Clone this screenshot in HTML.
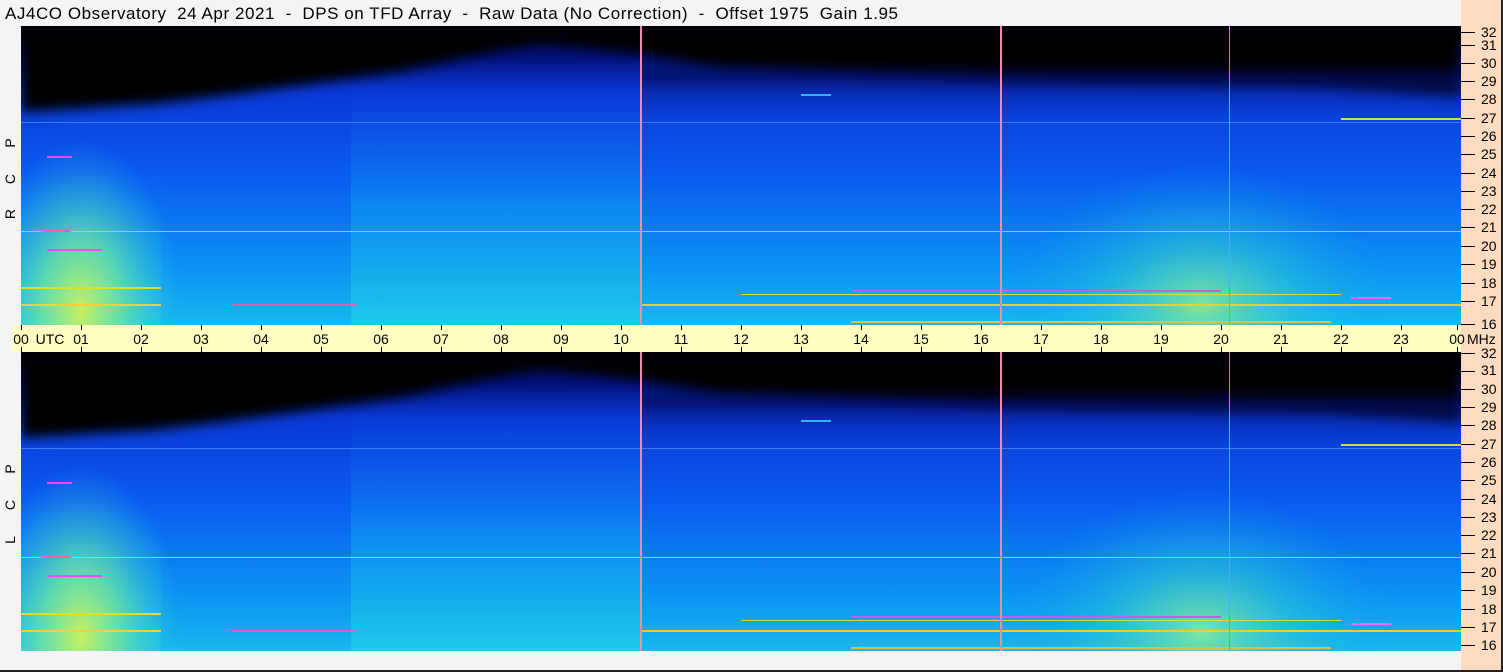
<!DOCTYPE html>
<html><head><meta charset="utf-8"><style>
html,body{margin:0;padding:0;background:#f4f4f6;overflow:hidden;width:1503px;height:672px;}
svg{display:block;font-family:"Liberation Sans",sans-serif;}
text{white-space:pre;}
</style></head><body>
<svg width="1503" height="672" viewBox="0 0 1503 672" xmlns="http://www.w3.org/2000/svg">
<defs>
<clipPath id="pc"><rect x="0" y="0" width="1440" height="299"/></clipPath>
<linearGradient id="vg" x1="0" y1="0" x2="0" y2="1">
<stop offset="0" stop-color="#000008"/>
<stop offset="0.1" stop-color="#021078"/>
<stop offset="0.22" stop-color="#0a38d6"/>
<stop offset="0.5" stop-color="#0a5cf0"/>
<stop offset="0.8" stop-color="#0c90f2"/>
<stop offset="1" stop-color="#18b8ee"/>
</linearGradient>
<linearGradient id="mid" x1="0" y1="0" x2="0" y2="1">
<stop offset="0.2" stop-color="#0a60f0" stop-opacity="0"/>
<stop offset="0.6" stop-color="#10a0f0" stop-opacity="0.5"/>
<stop offset="1" stop-color="#20d0e8" stop-opacity="0.7"/>
</linearGradient>
<linearGradient id="nav" x1="0" y1="0" x2="0" y2="1">
<stop offset="0" stop-color="#000010" stop-opacity="0"/>
<stop offset="0.3" stop-color="#020c60" stop-opacity="0.7"/>
<stop offset="1" stop-color="#0a38d6" stop-opacity="0"/>
</linearGradient>
<radialGradient id="lb" cx="0.5" cy="0.5" r="0.5">
<stop offset="0" stop-color="#c8f060"/>
<stop offset="0.4" stop-color="#70e8a0" stop-opacity="0.8"/>
<stop offset="1" stop-color="#20c0e8" stop-opacity="0"/>
</radialGradient>
<radialGradient id="rb" cx="0.5" cy="0.5" r="0.5">
<stop offset="0" stop-color="#90f090" stop-opacity="0.85"/>
<stop offset="0.5" stop-color="#30d0d0" stop-opacity="0.45"/>
<stop offset="1" stop-color="#10a0f0" stop-opacity="0"/>
</radialGradient>
<filter id="bl" x="-0.1" y="-0.5" width="1.2" height="2"><feGaussianBlur stdDeviation="6"/></filter>
<g id="panel">
<g clip-path="url(#pc)">
<rect x="0" y="0" width="1440" height="299" fill="url(#vg)"/>
<rect x="330" y="0" width="290" height="299" fill="url(#mid)"/>
<rect x="0" y="100" width="140" height="199" fill="url(#mid)" opacity="0.6"/>
<ellipse cx="60" cy="285" rx="100" ry="170" fill="url(#lb)"/>
<ellipse cx="1180" cy="280" rx="190" ry="140" fill="url(#rb)"/>
<polygon points="0,-20 1440,-20 1440,70 1300,60 1000,55 700,42 620,28 520,15 380,45 200,70 130,78 0,86" fill="#000006" filter="url(#bl)"/>
<rect x="0" y="0" width="1440" height="12" fill="#000006"/>
<rect x="620" y="30" width="820" height="70" fill="url(#nav)"/>
<rect x="0" y="96" width="1440" height="1" fill="#3a7cff"/>
<rect x="0" y="205" width="1440" height="1" fill="#d8e020" opacity="0.8"/>
<rect x="0" y="261" width="140" height="2" fill="#e0e020"/>
<rect x="0" y="278" width="140" height="2" fill="#f0d040"/>
<rect x="210" y="278" width="125" height="2" fill="#e060c0"/>
<rect x="620" y="278" width="820" height="2" fill="#e8d030"/>
<rect x="830" y="264" width="370" height="2" fill="#c060e0"/>
<rect x="720" y="268" width="600" height="1" fill="#d0e040"/>
<rect x="830" y="295" width="480" height="2" fill="#e0c040"/>
<rect x="26" y="130" width="25" height="2" fill="#ff40ff"/>
<rect x="26" y="223" width="55" height="2" fill="#ff40ff"/>
<rect x="20" y="204" width="30" height="2" fill="#ff60a0"/>
<rect x="1330" y="271" width="40" height="2" fill="#ff60ff"/>
<rect x="1320" y="92" width="120" height="2" fill="#d0e040"/>
<rect x="780" y="68" width="30" height="2" fill="#30b0ff"/>
<rect x="619" y="0" width="2" height="299" fill="#f088b0"/>
<rect x="979" y="0" width="2" height="299" fill="#f088b0"/>
<rect x="1208" y="0" width="1" height="299" fill="#40b0ff"/>
</g>
</g>
</defs>
<text x="5" y="19" font-size="17" fill="#000" xml:space="preserve" textLength="893" lengthAdjust="spacing">AJ4CO Observatory  24 Apr 2021  -  DPS on TFD Array  -  Raw Data (No Correction)  -  Offset 1975  Gain 1.95</text>
<rect x="1461" y="0" width="42" height="672" fill="#fcdcc0"/>
<use href="#panel" x="21" y="26"/>
<use href="#panel" x="21" y="352"/>
<rect x="12" y="325" width="1449" height="27" fill="#ffffc4"/>
<g font-size="14" fill="#000" text-anchor="middle">
<text x="21" y="344">00</text><text x="50" y="344">UTC</text>
<text x="81" y="344">01</text><text x="141" y="344">02</text><text x="201" y="344">03</text><text x="261" y="344">04</text><text x="321" y="344">05</text><text x="381" y="344">06</text><text x="441" y="344">07</text><text x="501" y="344">08</text><text x="561" y="344">09</text><text x="621" y="344">10</text><text x="681" y="344">11</text><text x="741" y="344">12</text><text x="801" y="344">13</text><text x="861" y="344">14</text><text x="921" y="344">15</text><text x="981" y="344">16</text><text x="1041" y="344">17</text><text x="1101" y="344">18</text><text x="1161" y="344">19</text><text x="1221" y="344">20</text><text x="1281" y="344">21</text><text x="1341" y="344">22</text><text x="1401" y="344">23</text><text x="1457" y="344">00</text>
</g>
<text x="1467" y="344" font-size="14">MHz</text>
<g stroke="#000" stroke-width="1">
<path d="M21.5,325v5M81.5,325v5M141.5,325v5M201.5,325v5M261.5,325v5M321.5,325v5M381.5,325v5M441.5,325v5M501.5,325v5M561.5,325v5M621.5,325v5M681.5,325v5M741.5,325v5M801.5,325v5M861.5,325v5M921.5,325v5M981.5,325v5M1041.5,325v5M1101.5,325v5M1161.5,325v5M1221.5,325v5M1281.5,325v5M1341.5,325v5M1401.5,325v5M1457.5,325v5"/>
<path d="M21.5,347v5M81.5,347v5M141.5,347v5M201.5,347v5M261.5,347v5M321.5,347v5M381.5,347v5M441.5,347v5M501.5,347v5M561.5,347v5M621.5,347v5M681.5,347v5M741.5,347v5M801.5,347v5M861.5,347v5M921.5,347v5M981.5,347v5M1041.5,347v5M1101.5,347v5M1161.5,347v5M1221.5,347v5M1281.5,347v5M1341.5,347v5M1401.5,347v5M1457.5,347v5"/>
</g>
<g font-size="14" fill="#000">
<text x="1481" y="37">32</text><text x="1481" y="50">31</text><text x="1481" y="68">30</text><text x="1481" y="86">29</text><text x="1481" y="104">28</text><text x="1481" y="123">27</text><text x="1481" y="141">26</text><text x="1481" y="159">25</text><text x="1481" y="178">24</text><text x="1481" y="196">23</text><text x="1481" y="214">22</text><text x="1481" y="232">21</text><text x="1481" y="251">20</text><text x="1481" y="269">19</text><text x="1481" y="288">18</text><text x="1481" y="306">17</text><text x="1481" y="329">16</text>
<g transform="translate(0,326)">
<text x="1481" y="32">32</text><text x="1481" y="49">31</text><text x="1481" y="68">30</text><text x="1481" y="86">29</text><text x="1481" y="104">28</text><text x="1481" y="123">27</text><text x="1481" y="141">26</text><text x="1481" y="159">25</text><text x="1481" y="178">24</text><text x="1481" y="196">23</text><text x="1481" y="214">22</text><text x="1481" y="232">21</text><text x="1481" y="251">20</text><text x="1481" y="269">19</text><text x="1481" y="288">18</text><text x="1481" y="306">17</text><text x="1481" y="324">16</text>
</g>
</g>
<g stroke="#000">
<path d="M1461,32.5h14M1461,45.5h14M1461,63.5h14M1461,81.5h14M1461,99.5h14M1461,118.5h14M1461,136.5h14M1461,154.5h14M1461,173.5h14M1461,191.5h14M1461,209.5h14M1461,227.5h14M1461,246.5h14M1461,264.5h14M1461,283.5h14M1461,301.5h14M1461,324.5h14"/>
<path d="M1461,353.5h14M1461,371.5h14M1461,389.5h14M1461,407.5h14M1461,425.5h14M1461,444.5h14M1461,462.5h14M1461,480.5h14M1461,499.5h14M1461,517.5h14M1461,535.5h14M1461,553.5h14M1461,572.5h14M1461,590.5h14M1461,609.5h14M1461,627.5h14M1461,645.5h14"/>
</g>
<g font-size="14" fill="#000" text-anchor="middle">
<text transform="translate(15,214) rotate(-90)">R</text>
<text transform="translate(15,179) rotate(-90)">C</text>
<text transform="translate(15,143) rotate(-90)">P</text>
<text transform="translate(15,540) rotate(-90)">L</text>
<text transform="translate(15,505) rotate(-90)">C</text>
<text transform="translate(15,469) rotate(-90)">P</text>
</g>
<rect x="0" y="670" width="1503" height="2" fill="#222"/>
<rect x="1501" y="0" width="2" height="672" fill="#222"/>
</svg>
</body></html>
